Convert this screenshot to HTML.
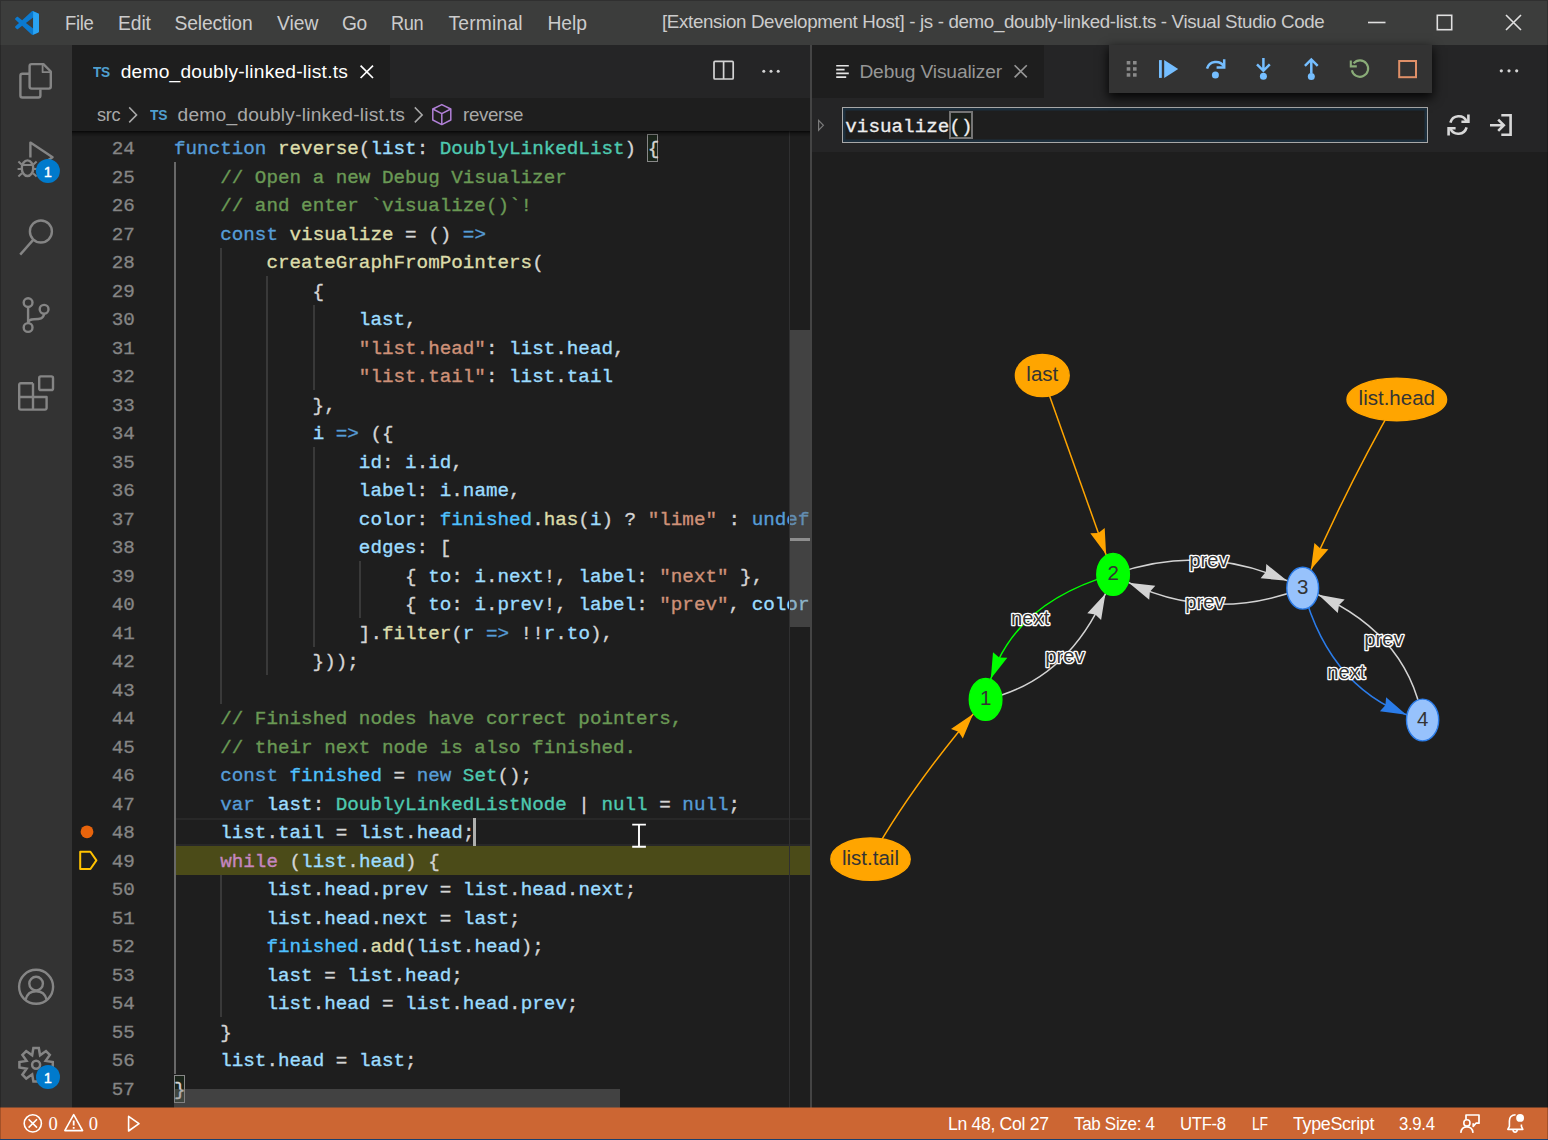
<!DOCTYPE html>
<html><head><meta charset="utf-8"><title>Visual Studio Code</title>
<style>
*{box-sizing:border-box;margin:0;padding:0}
html,body{width:1548px;height:1140px;overflow:hidden;background:#1e1e1e}
body{position:relative;font-family:"Liberation Sans",sans-serif;color:#ccc;font-size:18.2px}
.abs{position:absolute}
.t{position:absolute;white-space:pre;line-height:20px;height:20px}
#title{left:0;top:0;width:1548px;height:45px;background:#3c3d3c}
#title .m{position:absolute;top:0;height:45px;line-height:44px;color:#cccccc;font-size:18.4px;white-space:nowrap}
#act{left:0;top:45px;width:72px;height:1063px;background:#333333}
#tabsL{left:72px;top:45px;width:739px;height:53px;background:#252526}
#tabL{left:72px;top:45px;width:317.5px;height:53px;background:#1e1e1e}
#bc{left:72px;top:98px;width:739px;height:33px;background:#1e1e1e}
#ed{left:72px;top:131px;width:739px;height:977px;background:#1e1e1e;overflow:hidden}
#edwrap{position:absolute;left:-72px;top:-131px;width:1548px;height:1140px}
.ln{position:absolute;left:72px;width:62.8px;text-align:right;height:28.5px;line-height:28.5px;font-family:"Liberation Mono",monospace;font-size:19.25px;color:#858585;white-space:pre;-webkit-text-stroke:0.3px}
.cl{position:absolute;left:174px;height:28.5px;line-height:28.5px;font-family:"Liberation Mono",monospace;font-size:19.25px;color:#d4d4d4;white-space:pre;-webkit-text-stroke:0.35px}
.bm{position:absolute;width:11.2px;height:28px;border:1px solid #888;background:rgba(0,100,0,0.1)}
.ig{position:absolute;width:2px;background:#393939}
.ig.act{background:#686868}
#status{left:0;top:1108px;width:1548px;height:32px;background:#cc6633;color:#fff}
#status .s{position:absolute;top:0;height:33px;line-height:32px;font-size:18.2px;white-space:nowrap;color:#fff}
#right{left:810px;top:45px;width:738px;height:1063px;background:#1e1e1e;border-left:2px solid #444}
#tabsR{left:812px;top:45px;width:736px;height:53px;background:#252526}
#tabR{left:812px;top:45px;width:232px;height:53px;background:#1e1e1e}
#wvtop{left:812px;top:98px;width:736px;height:54px;background:#252526}
#inp{left:842px;top:107px;width:586px;height:36px;border:1px solid #a8a8a8;background:#1e1e1e;box-shadow:inset 0 0 0 2.5px #1d2f3d}
#dbg{left:1109px;top:45px;width:323px;height:48px;background:#333333;box-shadow:0 4px 10px 1px rgba(0,0,0,.85)}
</style></head><body>
<div id="title" class="abs">
<svg class="abs" style="left:14.8px;top:10.8px" width="24.2" height="24" viewBox="0 0 100 100">
<path fill="#0b7ad0" fill-rule="evenodd" d="M96.5 10.8 L75.9 0.9 C73.5 -0.2 70.7 0.3 68.8 2.1 L29.4 38.1 L12.2 25.1 C10.6 23.9 8.4 24 6.9 25.3 L1.4 30.3 C-0.4 32 -0.4 34.8 1.4 36.5 L16.3 50 L1.4 63.5 C-0.4 65.2 -0.4 68 1.4 69.7 L6.9 74.7 C8.4 76 10.6 76.1 12.2 74.9 L29.4 61.9 L68.8 97.9 C70.7 99.7 73.5 100.2 75.9 99.1 L96.5 89.2 C98.6 88.2 100 86 100 83.6 V16.4 C100 14 98.6 11.8 96.5 10.8 Z M75 72.7 L45.1 50 L75 27.3 Z"/>
<path fill="#2aa3f3" d="M75 1 L96.5 10.8 C98.6 11.8 100 14 100 16.4 V83.6 C100 86 98.6 88.2 96.5 89.2 L75 99 Z"/>
</svg>
<div class="t" style="left:64.9px;top:13.7px;font-size:19.30px;letter-spacing:-0.350px;color:#cccccc;font-family:'Liberation Sans',sans-serif;transform:scaleX(0.9584);transform-origin:0 0;">File</div>
<div class="t" style="left:118.1px;top:13.7px;font-size:19.30px;letter-spacing:-0.133px;color:#cccccc;font-family:'Liberation Sans',sans-serif;">Edit</div>
<div class="t" style="left:174.6px;top:13.7px;font-size:19.30px;letter-spacing:-0.163px;color:#cccccc;font-family:'Liberation Sans',sans-serif;">Selection</div>
<div class="t" style="left:277.0px;top:13.7px;font-size:19.30px;letter-spacing:-0.033px;color:#cccccc;font-family:'Liberation Sans',sans-serif;">View</div>
<div class="t" style="left:341.6px;top:13.7px;font-size:19.30px;letter-spacing:-0.350px;color:#cccccc;font-family:'Liberation Sans',sans-serif;transform:scaleX(0.9941);transform-origin:0 0;">Go</div>
<div class="t" style="left:391.3px;top:13.7px;font-size:19.30px;letter-spacing:-0.350px;color:#cccccc;font-family:'Liberation Sans',sans-serif;transform:scaleX(0.9424);transform-origin:0 0;">Run</div>
<div class="t" style="left:448.5px;top:13.7px;font-size:19.30px;letter-spacing:0.171px;color:#cccccc;font-family:'Liberation Sans',sans-serif;">Terminal</div>
<div class="t" style="left:547.5px;top:13.7px;font-size:19.30px;letter-spacing:-0.067px;color:#cccccc;font-family:'Liberation Sans',sans-serif;">Help</div>
<div class="t" style="left:661.7px;top:12.3px;font-size:19.00px;letter-spacing:-0.350px;color:#cccccc;font-family:'Liberation Sans',sans-serif;transform:scaleX(0.9860);transform-origin:0 0;">[Extension Development Host] - js - demo_doubly-linked-list.ts - Visual Studio Code</div>
<svg class="abs" style="left:1360px;top:8px" width="170" height="30" viewBox="0 0 170 30" fill="none" stroke="#e0e0e0" stroke-width="1.6">
<path d="M8 14.5 H25.5"/><rect x="77.3" y="7.3" width="14.4" height="14.4"/><path d="M146 7 L161 22 M161 7 L146 22"/></svg>
</div>
<div id="act" class="abs">
<svg class="abs" style="left:0;top:0" width="72" height="1062" viewBox="0 45 72 1062" fill="none" stroke="#858585" stroke-width="2.4" stroke-linejoin="round" stroke-linecap="butt">
<!-- explorer -->
<path d="M29.6 73.8 H22.4 a2 2 0 0 0 -2 2 V95.5 a2 2 0 0 0 2 2 H38.4 a2 2 0 0 0 2 -2 V89.6"/>
<path d="M31.6 64.1 H43.4 L50.8 71.5 V86.6 a2 2 0 0 1 -2 2 H31.6 a2 2 0 0 1 -2 -2 V66.1 a2 2 0 0 1 2 -2 Z"/>
<path d="M42.6 64.6 V72.2 H50.2" stroke-width="1.8"/>
<!-- debug -->
<path d="M30.4 157.6 V142.6 L52.6 157.2 L46 161.4"/>
<ellipse cx="27.5" cy="168.2" rx="5.7" ry="7.8"/>
<path d="M22.2 165 H32.8" stroke-width="2"/>
<path d="M21.6 169 H17.6 M21.6 164.4 L18.4 161.4 M22 173.2 L18.4 176.6 M33.4 169 H37.4 M33.4 164.4 L36.6 161.4 M33 173.2 L36.6 176.6" stroke-width="2"/>
<!-- search -->
<circle cx="40.9" cy="231.5" r="11"/>
<path d="M33.4 239.6 L20.2 254.6"/>
<!-- scm -->
<circle cx="28.1" cy="302.6" r="4.4"/><circle cx="28.1" cy="327.5" r="4.4"/><circle cx="44.1" cy="309.3" r="4.4"/>
<path d="M28.1 307 V323.1"/>
<path d="M44.1 313.7 C43.5 318.6 40 319.2 34 319.2 C30.6 319.2 28.3 320.4 28.1 323"/>
<!-- extensions -->
<path d="M33 383.2 H20.8 a1.6 1.6 0 0 0 -1.6 1.6 V408 a1.6 1.6 0 0 0 1.6 1.6 H45 a1.6 1.6 0 0 0 1.6 -1.6 V397 H19.4 M33 383.2 V409.6"/>
<rect x="39.2" y="376.4" width="13.8" height="13.6" rx="1.6"/>
<!-- account -->
<circle cx="36.1" cy="986.8" r="17"/>
<circle cx="36.1" cy="983.6" r="6.8"/>
<path d="M25.6 999.6 C27 993.8 31 991.2 36.1 991.2 C41.2 991.2 45.2 993.8 46.6 999.6"/>
<!-- gear -->
<g transform="translate(36.1 1064.8)" stroke-linejoin="miter" stroke-width="2.5">
<circle r="4.0"/>
<path d="M-3.94 -9.52 L-2.70 -16.68 L2.70 -16.68 L3.94 -9.52 L9.89 -13.71 L13.71 -9.89 L9.52 -3.94 L16.68 -2.70 L16.68 2.70 L9.52 3.94 L13.71 9.89 L9.89 13.71 L3.94 9.52 L2.70 16.68 L-2.70 16.68 L-3.94 9.52 L-9.89 13.71 L-13.71 9.89 L-9.52 3.94 L-16.68 2.70 L-16.68 -2.70 L-9.52 -3.94 L-13.71 -9.89 L-9.89 -13.71 Z"/>
</g>
<circle cx="47.9" cy="171" r="12" fill="#007acc" stroke="none"/>
<circle cx="48" cy="1077" r="12" fill="#007acc" stroke="none"/>
</svg>
<div class="t" style="left:44px;top:116.9px;font-size:14px;-webkit-text-stroke:0.5px;color:#fff;line-height:20px;font-family:'Liberation Sans',sans-serif">1</div>
<div class="t" style="left:44.1px;top:1022.9px;font-size:14px;-webkit-text-stroke:0.5px;color:#fff;line-height:20px;font-family:'Liberation Sans',sans-serif">1</div>
</div>
<div id="tabsL" class="abs"></div><div id="tabL" class="abs"></div>
<div class="t" style="left:92.8px;top:61.7px;font-size:15.40px;letter-spacing:-0.350px;color:#4f9fcf;font-family:'Liberation Sans',sans-serif;font-weight:bold;transform:scaleX(0.8889);transform-origin:0 0;">TS</div>
<div class="t" style="left:120.7px;top:61.9px;font-size:19.20px;letter-spacing:0.212px;color:#ffffff;font-family:'Liberation Sans',sans-serif;">demo_doubly-linked-list.ts</div>
<svg class="abs" style="left:358px;top:63px" width="18" height="18" viewBox="0 0 18 18" fill="none" stroke="#ffffff" stroke-width="1.7"><path d="M2.6 2.6 L15 15 M15 2.6 L2.6 15"/></svg>
<svg class="abs" style="left:700px;top:55px" width="100" height="34" viewBox="700 55 100 34" fill="none" stroke="#d4d4d4" stroke-width="1.7">
<rect x="714" y="61.4" width="19.2" height="17.6" rx="1"/><path d="M723.6 61.4 V79"/>
<g fill="#d4d4d4" stroke="none"><circle cx="763.8" cy="71.3" r="1.5"/><circle cx="771" cy="71.3" r="1.5"/><circle cx="778.2" cy="71.3" r="1.5"/></g></svg>
<div id="bc" class="abs"></div>
<div class="t" style="left:96.5px;top:105.0px;font-size:19.00px;letter-spacing:-0.350px;color:#a9a9a9;font-family:'Liberation Sans',sans-serif;transform:scaleX(0.9553);transform-origin:0 0;">src</div>
<div class="t" style="left:150.0px;top:105.3px;font-size:15.40px;letter-spacing:-0.350px;color:#4f9fcf;font-family:'Liberation Sans',sans-serif;font-weight:bold;transform:scaleX(0.8992);transform-origin:0 0;">TS</div>
<div class="t" style="left:177.5px;top:104.9px;font-size:19.20px;letter-spacing:0.220px;color:#a9a9a9;font-family:'Liberation Sans',sans-serif;">demo_doubly-linked-list.ts</div>
<div class="t" style="left:463.3px;top:105.0px;font-size:19.00px;letter-spacing:-0.350px;color:#a9a9a9;font-family:'Liberation Sans',sans-serif;transform:scaleX(0.9869);transform-origin:0 0;">reverse</div>
<svg class="abs" style="left:120px;top:100px" width="340" height="30" viewBox="120 100 340 30" fill="none" stroke="#a9a9a9" stroke-width="1.5">
<path d="M129.2 107.4 L136.6 114.9 L129.2 122.4"/><path d="M414.8 107.4 L422.2 114.9 L414.8 122.4"/>
<g stroke="#b180d7" stroke-width="1.5" stroke-linejoin="round"><path d="M441.8 104.6 L450.8 109 V120 L441.8 124.6 L432.8 120 V109 Z"/><path d="M432.8 109 L441.8 113.6 L450.8 109 M441.8 113.6 V124.6"/></g>
</svg>
<div id="ed" class="abs"><div id="edwrap">
<div class="abs" style="left:174px;top:817.5px;width:637px;height:28.5px;border-top:2px solid #282828;border-bottom:2px solid #282828"></div>
<div class="abs" style="left:174px;top:846.0px;width:637px;height:28.5px;background:#4b4b18"></div>
<div class="bm" style="left:647.3px;top:134.0px"></div>
<div class="bm" style="left:173.6px;top:1074.5px"></div>
<div class="ig act" style="left:174.0px;top:162.00px;height:912.00px"></div>
<div class="ig " style="left:220.2px;top:247.50px;height:456.00px"></div>
<div class="ig " style="left:266.4px;top:276.00px;height:399.00px"></div>
<div class="ig " style="left:312.6px;top:304.50px;height:85.50px"></div>
<div class="ig " style="left:312.6px;top:447.00px;height:199.50px"></div>
<div class="ig " style="left:358.8px;top:561.00px;height:57.00px"></div>
<div class="ig " style="left:220.2px;top:874.50px;height:142.50px"></div>
<div class="ln" style="top:135.00px">24</div><div class="cl" style="top:135.00px"><span style="color:#569cd6">function</span> <span style="color:#dcdcaa">reverse</span>(<span style="color:#9cdcfe">list</span>: <span style="color:#4ec9b0">DoublyLinkedList</span>) <span class="br">{</span></div>
<div class="ln" style="top:163.50px">25</div><div class="cl" style="top:163.50px">    <span style="color:#6a9955">// Open a new Debug Visualizer</span></div>
<div class="ln" style="top:192.00px">26</div><div class="cl" style="top:192.00px">    <span style="color:#6a9955">// and enter `visualize()`!</span></div>
<div class="ln" style="top:220.50px">27</div><div class="cl" style="top:220.50px">    <span style="color:#569cd6">const</span> <span style="color:#dcdcaa">visualize</span> = () <span style="color:#569cd6">=&gt;</span></div>
<div class="ln" style="top:249.00px">28</div><div class="cl" style="top:249.00px">        <span style="color:#dcdcaa">createGraphFromPointers</span>(</div>
<div class="ln" style="top:277.50px">29</div><div class="cl" style="top:277.50px">            {</div>
<div class="ln" style="top:306.00px">30</div><div class="cl" style="top:306.00px">                <span style="color:#9cdcfe">last</span>,</div>
<div class="ln" style="top:334.50px">31</div><div class="cl" style="top:334.50px">                <span style="color:#ce9178">&quot;list.head&quot;</span>: <span style="color:#9cdcfe">list</span>.<span style="color:#9cdcfe">head</span>,</div>
<div class="ln" style="top:363.00px">32</div><div class="cl" style="top:363.00px">                <span style="color:#ce9178">&quot;list.tail&quot;</span>: <span style="color:#9cdcfe">list</span>.<span style="color:#9cdcfe">tail</span></div>
<div class="ln" style="top:391.50px">33</div><div class="cl" style="top:391.50px">            },</div>
<div class="ln" style="top:420.00px">34</div><div class="cl" style="top:420.00px">            <span style="color:#9cdcfe">i</span> <span style="color:#569cd6">=&gt;</span> ({</div>
<div class="ln" style="top:448.50px">35</div><div class="cl" style="top:448.50px">                <span style="color:#9cdcfe">id</span>: <span style="color:#9cdcfe">i</span>.<span style="color:#9cdcfe">id</span>,</div>
<div class="ln" style="top:477.00px">36</div><div class="cl" style="top:477.00px">                <span style="color:#9cdcfe">label</span>: <span style="color:#9cdcfe">i</span>.<span style="color:#9cdcfe">name</span>,</div>
<div class="ln" style="top:505.50px">37</div><div class="cl" style="top:505.50px">                <span style="color:#9cdcfe">color</span>: <span style="color:#4fc1ff">finished</span>.<span style="color:#dcdcaa">has</span>(<span style="color:#9cdcfe">i</span>) ? <span style="color:#ce9178">&quot;lime&quot;</span> : <span style="color:#569cd6">undefined</span>,</div>
<div class="ln" style="top:534.00px">38</div><div class="cl" style="top:534.00px">                <span style="color:#9cdcfe">edges</span>: [</div>
<div class="ln" style="top:562.50px">39</div><div class="cl" style="top:562.50px">                    { <span style="color:#9cdcfe">to</span>: <span style="color:#9cdcfe">i</span>.<span style="color:#9cdcfe">next</span>!, <span style="color:#9cdcfe">label</span>: <span style="color:#ce9178">&quot;next&quot;</span> },</div>
<div class="ln" style="top:591.00px">40</div><div class="cl" style="top:591.00px">                    { <span style="color:#9cdcfe">to</span>: <span style="color:#9cdcfe">i</span>.<span style="color:#9cdcfe">prev</span>!, <span style="color:#9cdcfe">label</span>: <span style="color:#ce9178">&quot;prev&quot;</span>, <span style="color:#9cdcfe">color</span>: <span style="color:#ce9178">&quot;lightgray&quot;</span> },</div>
<div class="ln" style="top:619.50px">41</div><div class="cl" style="top:619.50px">                ].<span style="color:#dcdcaa">filter</span>(<span style="color:#9cdcfe">r</span> <span style="color:#569cd6">=&gt;</span> !!<span style="color:#9cdcfe">r</span>.<span style="color:#9cdcfe">to</span>),</div>
<div class="ln" style="top:648.00px">42</div><div class="cl" style="top:648.00px">            }));</div>
<div class="ln" style="top:676.50px">43</div><div class="cl" style="top:676.50px"></div>
<div class="ln" style="top:705.00px">44</div><div class="cl" style="top:705.00px">    <span style="color:#6a9955">// Finished nodes have correct pointers,</span></div>
<div class="ln" style="top:733.50px">45</div><div class="cl" style="top:733.50px">    <span style="color:#6a9955">// their next node is also finished.</span></div>
<div class="ln" style="top:762.00px">46</div><div class="cl" style="top:762.00px">    <span style="color:#569cd6">const</span> <span style="color:#4fc1ff">finished</span> = <span style="color:#569cd6">new</span> <span style="color:#4ec9b0">Set</span>();</div>
<div class="ln" style="top:790.50px">47</div><div class="cl" style="top:790.50px">    <span style="color:#569cd6">var</span> <span style="color:#9cdcfe">last</span>: <span style="color:#4ec9b0">DoublyLinkedListNode</span> | <span style="color:#4ec9b0">null</span> = <span style="color:#569cd6">null</span>;</div>
<div class="ln" style="top:819.00px">48</div><div class="cl" style="top:819.00px">    <span style="color:#9cdcfe">list</span>.<span style="color:#9cdcfe">tail</span> = <span style="color:#9cdcfe">list</span>.<span style="color:#9cdcfe">head</span>;</div>
<div class="ln" style="top:847.50px">49</div><div class="cl" style="top:847.50px">    <span style="color:#c586c0">while</span> (<span style="color:#9cdcfe">list</span>.<span style="color:#9cdcfe">head</span>) {</div>
<div class="ln" style="top:876.00px">50</div><div class="cl" style="top:876.00px">        <span style="color:#9cdcfe">list</span>.<span style="color:#9cdcfe">head</span>.<span style="color:#9cdcfe">prev</span> = <span style="color:#9cdcfe">list</span>.<span style="color:#9cdcfe">head</span>.<span style="color:#9cdcfe">next</span>;</div>
<div class="ln" style="top:904.50px">51</div><div class="cl" style="top:904.50px">        <span style="color:#9cdcfe">list</span>.<span style="color:#9cdcfe">head</span>.<span style="color:#9cdcfe">next</span> = <span style="color:#9cdcfe">last</span>;</div>
<div class="ln" style="top:933.00px">52</div><div class="cl" style="top:933.00px">        <span style="color:#4fc1ff">finished</span>.<span style="color:#dcdcaa">add</span>(<span style="color:#9cdcfe">list</span>.<span style="color:#9cdcfe">head</span>);</div>
<div class="ln" style="top:961.50px">53</div><div class="cl" style="top:961.50px">        <span style="color:#9cdcfe">last</span> = <span style="color:#9cdcfe">list</span>.<span style="color:#9cdcfe">head</span>;</div>
<div class="ln" style="top:990.00px">54</div><div class="cl" style="top:990.00px">        <span style="color:#9cdcfe">list</span>.<span style="color:#9cdcfe">head</span> = <span style="color:#9cdcfe">list</span>.<span style="color:#9cdcfe">head</span>.<span style="color:#9cdcfe">prev</span>;</div>
<div class="ln" style="top:1018.50px">55</div><div class="cl" style="top:1018.50px">    }</div>
<div class="ln" style="top:1047.00px">56</div><div class="cl" style="top:1047.00px">    <span style="color:#9cdcfe">list</span>.<span style="color:#9cdcfe">head</span> = <span style="color:#9cdcfe">last</span>;</div>
<div class="ln" style="top:1075.50px">57</div><div class="cl" style="top:1075.50px"><span class="br">}</span></div>
<svg class="abs" style="left:72px;top:815px" width="40" height="64" viewBox="72 815 40 64">
<circle cx="87" cy="831.8" r="6.4" fill="#e8640c"/>
<path d="M80.2 851.8 H90.4 L96.4 860.4 L90.4 869 H80.2 Z" fill="none" stroke="#ffc200" stroke-width="2" stroke-linejoin="round"/>
</svg>
<div class="abs" style="left:473px;top:818px;width:3px;height:28px;background:#aeafad"></div>
<svg class="abs" style="left:628px;top:820px" width="22" height="32" viewBox="628 820 22 32" fill="none" stroke="#fff" stroke-width="1.6">
<path d="M632.2 824.6 H645.9 M632.2 846.8 H645.9 M639 824.6 V846.8" stroke-width="1.9"/></svg>
<div class="abs" style="left:789px;top:131px;width:1px;height:977px;background:#303031"></div>
<div class="abs" style="left:790px;top:330px;width:21px;height:297px;background:rgba(121,121,121,.4)"></div>
<div class="abs" style="left:790px;top:537.5px;width:20px;height:3px;background:#8e8e8e"></div>
<div class="abs" style="left:174px;top:1089px;width:446px;height:19px;background:rgba(121,121,121,.4)"></div>
<div class="abs" style="left:72px;top:131px;width:739px;height:6px;background:linear-gradient(rgba(0,0,0,.75) 0,rgba(0,0,0,.3) 40%,rgba(0,0,0,0) 100%)"></div>
</div></div>
<div id="right" class="abs"></div>
<div id="tabsR" class="abs"></div><div id="tabR" class="abs"></div>
<div id="wvtop" class="abs"></div>
<div id="inp" class="abs"></div>
<svg class="abs" style="left:812px;top:45px" width="736" height="107" viewBox="812 45 736 107" fill="none">
<g stroke="#e4e4e4" stroke-width="1.6"><path d="M836.2 65.8 H848.8 M836.2 69.6 H844.6 M836.2 73.4 H848.8 M836.2 77.1 H846.2"/></g>
<path d="M1014.6 65.2 L1026.8 77.4 M1026.8 65.2 L1014.6 77.4" stroke="#969696" stroke-width="1.6"/>
<g fill="#d4d4d4"><circle cx="1501.3" cy="70.8" r="1.6"/><circle cx="1509" cy="70.8" r="1.6"/><circle cx="1516.7" cy="70.8" r="1.6"/></g>
<path d="M818.6 120.4 L823.4 125.3 L818.6 130.2 Z" stroke="#7a7a7a" stroke-width="1.2"/>
<g stroke="#d8d8d8" stroke-width="2.6" stroke-linejoin="miter">
<path d="M1466.6 121.4 A8.6 8.6 0 0 0 1450.4 122.6"/><path d="M1468.4 114.6 V121.8 H1461.4"/>
<path d="M1450.4 128.6 A8.6 8.6 0 0 0 1466.6 127.4"/><path d="M1448.6 135.4 V128.2 H1455.6"/>
<path d="M1490 125.2 H1503.6 M1498.2 119.6 L1503.8 125.2 L1498.2 130.8"/><path d="M1501.3 115.3 H1510.6 V134.8 H1501.3"/>
</g>
</svg>
<div class="t" style="left:859.4px;top:62.1px;font-size:19.20px;letter-spacing:-0.133px;color:#969696;font-family:'Liberation Sans',sans-serif;">Debug Visualizer</div>
<div class="abs" style="left:949px;top:111px;width:24px;height:28px;border:2px solid #757575;background:#1a1f1a"></div>
<div class="t" style="left:845.3px;top:116.7px;font-size:19.28px;-webkit-text-stroke:0.3px;color:#eeeeee;font-family:'Liberation Mono',monospace">visualize()</div>
<svg class="abs" style="left:812px;top:152px" width="736" height="955" viewBox="812 152 736 955">
<style>.el{font-family:"Liberation Sans",sans-serif;font-size:20.2px;text-anchor:middle;fill:#343434;stroke:#fff;stroke-width:2.7px;paint-order:stroke;stroke-linejoin:round}.nl{font-family:"Liberation Sans",sans-serif;font-size:20.5px;text-anchor:middle;fill:#343434}</style>
<path d="M1042.3 375.5 Q1077.7 474.9 1113.1 574.4" fill="none" stroke="#ffa500" stroke-width="1.5"/>
<path d="M1396.8 399.4 Q1347.0 486.0 1302.7 588.2" fill="none" stroke="#ffa500" stroke-width="1.5"/>
<path d="M870.5 859.2 Q911.0 786.0 985.6 699.4" fill="none" stroke="#ffa500" stroke-width="1.5"/>
<path d="M1113.1 574.4 Q1210.1 539.7 1302.7 588.2" fill="none" stroke="#d3d3d3" stroke-width="1.5"/>
<path d="M1302.7 588.2 Q1204.1 626.3 1113.1 574.4" fill="none" stroke="#d3d3d3" stroke-width="1.5"/>
<path d="M1113.1 574.4 Q1003.0 606.0 985.6 699.4" fill="none" stroke="#00ff00" stroke-width="1.5"/>
<path d="M985.6 699.4 Q1075.6 679.1 1113.1 574.4" fill="none" stroke="#d3d3d3" stroke-width="1.5"/>
<path d="M1302.7 588.2 Q1331.3 694.9 1422.6 720.0" fill="none" stroke="#2b7ce9" stroke-width="1.5"/>
<path d="M1422.6 720.0 Q1407.0 628.3 1302.7 588.2" fill="none" stroke="#d3d3d3" stroke-width="1.5"/>
<path d="M1106.1 554.6 L1090.3 533.2 L1098.4 533.0 L1104.7 528.1 Z" fill="#ffa500"/>
<path d="M1310.9 569.4 L1314.4 543.1 L1320.4 548.5 L1328.4 549.3 Z" fill="#ffa500"/>
<path d="M973.1 714.1 L962.8 738.6 L958.5 731.8 L951.0 728.9 Z" fill="#ffa500"/>
<path d="M1287.1 580.7 L1260.6 578.3 L1265.8 572.1 L1266.3 564.1 Z" fill="#d3d3d3"/>
<path d="M1128.8 582.7 L1155.3 585.7 L1149.9 591.7 L1149.2 599.8 Z" fill="#d3d3d3"/>
<path d="M990.8 678.7 L993.0 652.2 L999.2 657.4 L1007.3 657.8 Z" fill="#00ff00"/>
<path d="M1105.4 593.7 L1101.1 620.0 L1095.3 614.4 L1087.3 613.3 Z" fill="#d3d3d3"/>
<path d="M1406.3 714.7 L1379.9 711.3 L1385.4 705.3 L1386.1 697.3 Z" fill="#2b7ce9"/>
<path d="M1318.5 594.8 L1344.7 599.4 L1339.0 605.1 L1337.8 613.1 Z" fill="#d3d3d3"/>
<text x="1209.0" y="566.5" class="el">prev</text>
<text x="1204.9" y="608.7" class="el">prev</text>
<text x="1030.2" y="624.6" class="el">next</text>
<text x="1065.0" y="662.8" class="el">prev</text>
<text x="1346.3" y="679.4" class="el">next</text>
<text x="1383.9" y="645.8" class="el">prev</text>
<ellipse cx="1042.3" cy="375.5" rx="26.9" ry="21.1" fill="#ffa500" stroke="#ffa500" stroke-width="1.4"/>
<text x="1042.3" y="381.0" class="nl">last</text>
<ellipse cx="1396.8" cy="399.4" rx="49.8" ry="21.3" fill="#ffa500" stroke="#ffa500" stroke-width="1.4"/>
<text x="1396.8" y="404.9" class="nl">list.head</text>
<ellipse cx="870.5" cy="859.2" rx="39.7" ry="21.2" fill="#ffa500" stroke="#ffa500" stroke-width="1.4"/>
<text x="870.5" y="864.7" class="nl">list.tail</text>
<ellipse cx="985.6" cy="699.4" rx="16.3" ry="21.0" fill="#00ff00" stroke="#00ff00" stroke-width="1.4"/>
<text x="985.6" y="704.9" class="nl">1</text>
<ellipse cx="1113.1" cy="574.4" rx="16.3" ry="21.0" fill="#00ff00" stroke="#00ff00" stroke-width="1.4"/>
<text x="1113.1" y="579.9" class="nl">2</text>
<ellipse cx="1302.7" cy="588.2" rx="15.9" ry="20.9" fill="#97c2fc" stroke="#2b7ce9" stroke-width="1.4"/>
<text x="1302.7" y="593.7" class="nl">3</text>
<ellipse cx="1422.6" cy="720.0" rx="16.1" ry="20.9" fill="#97c2fc" stroke="#2b7ce9" stroke-width="1.4"/>
<text x="1422.6" y="725.5" class="nl">4</text>
</svg>
<div id="dbg" class="abs"></div>
<svg class="abs" style="left:1109px;top:47px" width="323" height="46" viewBox="1109 47 323 46" fill="none">
<g fill="#8a8a8a"><rect x="1126.7" y="61" width="3.6" height="3.5"/><rect x="1133" y="61" width="3.6" height="3.5"/><rect x="1126.7" y="67.2" width="3.6" height="3.5"/><rect x="1133" y="67.2" width="3.6" height="3.5"/><rect x="1126.7" y="73.2" width="3.6" height="3.5"/><rect x="1133" y="73.2" width="3.6" height="3.5"/></g>
<g fill="#75beff"><rect x="1159" y="60.1" width="2.8" height="17.8"/><path d="M1164.2 60.1 L1178.2 69 L1164.2 77.9 Z"/>
<circle cx="1215.4" cy="75" r="3.5"/><circle cx="1263.4" cy="76.3" r="3.5"/><circle cx="1311.3" cy="76.5" r="3.5"/></g>
<g stroke="#75beff" stroke-width="2.5">
<path d="M1207 68.6 A9.4 9.4 0 0 1 1224 66.4"/><path d="M1224.2 59.2 V67.4 H1216.6"/>
<path d="M1263.4 58 V70.2 M1257 64.4 L1263.4 70.8 L1269.8 64.4"/>
<path d="M1311.3 73.2 V59.6 M1304.9 65.8 L1311.3 59.4 L1317.7 65.8"/>
</g>
<g stroke="#8aac78" stroke-width="2.1"><path d="M1353.6 63.4 A8.2 8.2 0 1 1 1351.9 70.2"/><path d="M1350.8 60.4 V66.4 H1356.8"/></g>
<rect x="1399.2" y="61" width="16.8" height="16.2" stroke="#e09068" stroke-width="2"/>
</svg>
<div id="status" class="abs">
<div class="t" style="left:948.0px;top:5.8px;font-size:18.80px;letter-spacing:-0.350px;color:#ffffff;font-family:'Liberation Sans',sans-serif;transform:scaleX(0.9387);transform-origin:0 0;">Ln 48, Col 27</div>
<div class="t" style="left:1073.7px;top:5.8px;font-size:18.80px;letter-spacing:-0.350px;color:#ffffff;font-family:'Liberation Sans',sans-serif;transform:scaleX(0.9050);transform-origin:0 0;">Tab Size: 4</div>
<div class="t" style="left:1180.0px;top:5.8px;font-size:18.80px;letter-spacing:-0.350px;color:#ffffff;font-family:'Liberation Sans',sans-serif;transform:scaleX(0.8902);transform-origin:0 0;">UTF-8</div>
<div class="t" style="left:1251.7px;top:5.8px;font-size:18.80px;letter-spacing:-0.350px;color:#ffffff;font-family:'Liberation Sans',sans-serif;transform:scaleX(0.7425);transform-origin:0 0;">LF</div>
<div class="t" style="left:1292.5px;top:5.8px;font-size:18.80px;letter-spacing:-0.350px;color:#ffffff;font-family:'Liberation Sans',sans-serif;transform:scaleX(0.9515);transform-origin:0 0;">TypeScript</div>
<div class="t" style="left:1399.0px;top:5.8px;font-size:18.80px;letter-spacing:-0.350px;color:#ffffff;font-family:'Liberation Sans',sans-serif;transform:scaleX(0.8911);transform-origin:0 0;">3.9.4</div>
<div class="t" style="left:48.6px;top:5.5px;font-size:18.6px;color:#fff;line-height:20px;font-family:'Liberation Serif',serif">0</div>
<div class="t" style="left:88.8px;top:5.5px;font-size:18.6px;color:#fff;line-height:20px;font-family:'Liberation Serif',serif">0</div>
<svg class="abs" style="left:0;top:0" width="1548" height="32" viewBox="0 1108 1548 32" fill="none" stroke="#fff" stroke-width="1.6" stroke-linejoin="round">
<circle cx="32.8" cy="1123.4" r="8.6"/><path d="M28.6 1119.2 L37 1127.6 M37 1119.2 L28.6 1127.6"/>
<path d="M73.7 1114.6 L82.6 1130.6 H64.8 Z"/><path d="M73.7 1120.4 V1125.6 M73.7 1127 V1128.8" stroke-width="1.8"/>
<path d="M128.6 1116.4 L139 1123.7 L128.6 1131 Z"/>
<!-- feedback -->
<path d="M1466 1119.6 V1115 H1479 V1123.2 H1476 L1473.2 1126.4 V1123.2" stroke-width="1.7"/>
<circle cx="1466.9" cy="1122.9" r="3.1"/><path d="M1460.8 1132.8 C1461.2 1128.6 1463.6 1126.9 1466.9 1126.9 C1470.2 1126.9 1472.6 1128.6 1473 1132.8"/>
<!-- bell -->
<path d="M1515.6 1114.7 C1511.4 1114.9 1509.4 1117.6 1509.4 1121 V1126.4 L1507.8 1129.4 H1522.8 L1521.4 1126.4 V1124.6"/>
<path d="M1513 1129.6 C1513 1131.4 1513.9 1132.2 1515.1 1132.2 C1516.3 1132.2 1517.2 1131.4 1517.2 1129.6"/>
<circle cx="1520.1" cy="1117.9" r="3.9" fill="#fff" stroke="none"/>
</svg>
<div class="abs" style="left:0;top:31px;width:1548px;height:1px;background:#17406f"></div>
<div class="abs" style="left:0;top:-1px;width:1548px;height:1px;background:rgba(204,102,51,.5)"></div>
</div>
<div class="abs" style="left:0;top:0;width:1548px;height:1139px;border:1px solid rgba(0,0,0,.2);border-bottom:0;pointer-events:none"></div>
</body></html>
